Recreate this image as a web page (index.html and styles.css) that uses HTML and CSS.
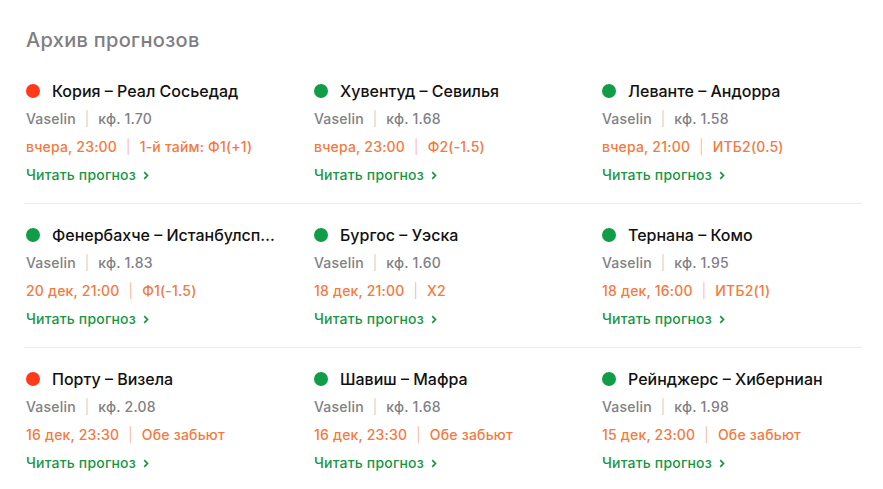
FILE: index.html
```html
<!DOCTYPE html>
<html lang="ru">
<head>
<meta charset="utf-8">
<link rel="stylesheet" href="styles.css">
</head>
<body>
<section class="archive">
  <h2 class="archive-title">Архив прогнозов</h2>

  <div class="row">
    <div class="card">
      <div class="match"><span class="dot dot-lose"></span><span class="teams">Кория – Реал Сосьедад</span></div>
      <div class="meta"><span>Vaselin</span><span class="sep">|</span><span>кф. 1.70</span></div>
      <div class="info"><span>вчера, 23:00</span><span class="sep">|</span><span>1-й тайм: Ф1(+1)</span></div>
      <a class="more" href="#">Читать прогноз<svg class="chev" width="6" height="9" viewBox="0 0 6 9"><path d="M1.2 1.2l3.3 3.3-3.3 3.3" fill="none" stroke="currentColor" stroke-width="1.7"/></svg></a>
    </div>
    <div class="card">
      <div class="match"><span class="dot dot-win"></span><span class="teams">Хувентуд – Севилья</span></div>
      <div class="meta"><span>Vaselin</span><span class="sep">|</span><span>кф. 1.68</span></div>
      <div class="info"><span>вчера, 23:00</span><span class="sep">|</span><span>Ф2(-1.5)</span></div>
      <a class="more" href="#">Читать прогноз<svg class="chev" width="6" height="9" viewBox="0 0 6 9"><path d="M1.2 1.2l3.3 3.3-3.3 3.3" fill="none" stroke="currentColor" stroke-width="1.7"/></svg></a>
    </div>
    <div class="card">
      <div class="match"><span class="dot dot-win"></span><span class="teams">Леванте – Андорра</span></div>
      <div class="meta"><span>Vaselin</span><span class="sep">|</span><span>кф. 1.58</span></div>
      <div class="info"><span>вчера, 21:00</span><span class="sep">|</span><span>ИТБ2(0.5)</span></div>
      <a class="more" href="#">Читать прогноз<svg class="chev" width="6" height="9" viewBox="0 0 6 9"><path d="M1.2 1.2l3.3 3.3-3.3 3.3" fill="none" stroke="currentColor" stroke-width="1.7"/></svg></a>
    </div>
  </div>

  <div class="row">
    <div class="card">
      <div class="match"><span class="dot dot-win"></span><span class="teams">Фенербахче – Истанбулспор</span></div>
      <div class="meta"><span>Vaselin</span><span class="sep">|</span><span>кф. 1.83</span></div>
      <div class="info"><span>20 дек, 21:00</span><span class="sep">|</span><span>Ф1(-1.5)</span></div>
      <a class="more" href="#">Читать прогноз<svg class="chev" width="6" height="9" viewBox="0 0 6 9"><path d="M1.2 1.2l3.3 3.3-3.3 3.3" fill="none" stroke="currentColor" stroke-width="1.7"/></svg></a>
    </div>
    <div class="card">
      <div class="match"><span class="dot dot-win"></span><span class="teams">Бургос – Уэска</span></div>
      <div class="meta"><span>Vaselin</span><span class="sep">|</span><span>кф. 1.60</span></div>
      <div class="info"><span>18 дек, 21:00</span><span class="sep">|</span><span>Х2</span></div>
      <a class="more" href="#">Читать прогноз<svg class="chev" width="6" height="9" viewBox="0 0 6 9"><path d="M1.2 1.2l3.3 3.3-3.3 3.3" fill="none" stroke="currentColor" stroke-width="1.7"/></svg></a>
    </div>
    <div class="card">
      <div class="match"><span class="dot dot-win"></span><span class="teams">Тернана – Комо</span></div>
      <div class="meta"><span>Vaselin</span><span class="sep">|</span><span>кф. 1.95</span></div>
      <div class="info"><span>18 дек, 16:00</span><span class="sep">|</span><span>ИТБ2(1)</span></div>
      <a class="more" href="#">Читать прогноз<svg class="chev" width="6" height="9" viewBox="0 0 6 9"><path d="M1.2 1.2l3.3 3.3-3.3 3.3" fill="none" stroke="currentColor" stroke-width="1.7"/></svg></a>
    </div>
  </div>

  <div class="row">
    <div class="card">
      <div class="match"><span class="dot dot-lose"></span><span class="teams">Порту – Визела</span></div>
      <div class="meta"><span>Vaselin</span><span class="sep">|</span><span>кф. 2.08</span></div>
      <div class="info"><span>16 дек, 23:30</span><span class="sep">|</span><span>Обе забьют</span></div>
      <a class="more" href="#">Читать прогноз<svg class="chev" width="6" height="9" viewBox="0 0 6 9"><path d="M1.2 1.2l3.3 3.3-3.3 3.3" fill="none" stroke="currentColor" stroke-width="1.7"/></svg></a>
    </div>
    <div class="card">
      <div class="match"><span class="dot dot-win"></span><span class="teams">Шавиш – Мафра</span></div>
      <div class="meta"><span>Vaselin</span><span class="sep">|</span><span>кф. 1.68</span></div>
      <div class="info"><span>16 дек, 23:30</span><span class="sep">|</span><span>Обе забьют</span></div>
      <a class="more" href="#">Читать прогноз<svg class="chev" width="6" height="9" viewBox="0 0 6 9"><path d="M1.2 1.2l3.3 3.3-3.3 3.3" fill="none" stroke="currentColor" stroke-width="1.7"/></svg></a>
    </div>
    <div class="card">
      <div class="match"><span class="dot dot-win"></span><span class="teams">Рейнджерс – Хиберниан</span></div>
      <div class="meta"><span>Vaselin</span><span class="sep">|</span><span>кф. 1.98</span></div>
      <div class="info"><span>15 дек, 23:00</span><span class="sep">|</span><span>Обе забьют</span></div>
      <a class="more" href="#">Читать прогноз<svg class="chev" width="6" height="9" viewBox="0 0 6 9"><path d="M1.2 1.2l3.3 3.3-3.3 3.3" fill="none" stroke="currentColor" stroke-width="1.7"/></svg></a>
    </div>
  </div>
</section>
</body>
</html>
```

FILE: styles.css
```css
* { box-sizing: border-box; }
html, body {
  margin: 0;
  padding: 0;
  background: #ffffff;
}
body {
  font-family: Inter, "Noto Sans", Arial, sans-serif;
  color: #111111;
}
.archive {
  width: 838px;
  margin-left: 24px;
  padding-top: 28px;
}
.archive-title {
  margin: 0 0 0 2px;
  font-size: 20px;
  line-height: 24px;
  font-weight: 500;
  letter-spacing: 0.3px;
  color: #7e7e83;
}
.row {
  display: grid;
  grid-template-columns: repeat(3, 1fr);
  column-gap: 26px;
  padding: 17px 0 14px;
  border-bottom: 1px solid #ebebeb;
}
.archive-title + .row { padding-top: 25px; }
.row:last-child { border-bottom: none; }
.card {
  padding-left: 2px;
  min-width: 0;
}
.match {
  display: flex;
  align-items: center;
  height: 28px;
  gap: 12px;
}
.dot {
  flex: none;
  width: 14px;
  height: 14px;
  border-radius: 50%;
}
.dot-win { background: #0f9d48; }
.dot-lose { background: #ff3a1a; }
.teams {
  font-size: 16px;
  line-height: 28px;
  font-weight: 500;
  color: #111111;
  white-space: nowrap;
  overflow: hidden;
  text-overflow: ellipsis;
  min-width: 0;
  padding-right: 8px;
}
.meta, .info {
  display: flex;
  align-items: center;
  height: 28px;
  font-size: 14px;
  line-height: 28px;
  font-weight: 500;
  letter-spacing: 0.2px;
}
.meta { color: #808085; }
.info { color: #f47a3e; }
.sep {
  margin: 0 9px;
  color: #c8c8cc;
  font-weight: 300;
}
.info .sep { color: #f7b08a; }
.more {
  display: flex;
  align-items: center;
  gap: 7px;
  height: 28px;
  font-size: 14px;
  line-height: 28px;
  font-weight: 500;
  letter-spacing: 0.2px;
  color: #17963f;
  text-decoration: none;
}
.chev { display: block; }
```
